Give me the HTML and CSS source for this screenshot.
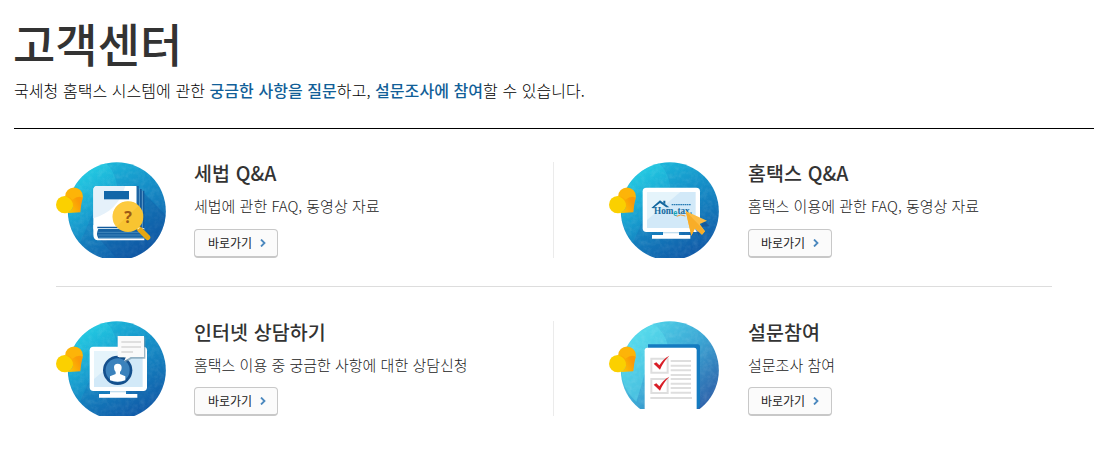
FILE: index.html
```html
<!DOCTYPE html>
<html lang="ko">
<head>
<meta charset="utf-8">
<title>고객센터</title>
<link rel="stylesheet" href="styles.css">
</head>
<body>
<svg class="defs" width="0" height="0" aria-hidden="true">
  <defs>
    <linearGradient id="sea" x1="0.2" y1="0" x2="0.75" y2="1">
      <stop offset="0" stop-color="#1cc0de"/><stop offset="0.42" stop-color="#1590c8"/><stop offset="1" stop-color="#1055a4"/>
    </linearGradient>
    <linearGradient id="sky" x1="0.15" y1="0.1" x2="0.9" y2="0.85">
      <stop offset="0" stop-color="#4fd6ea"/><stop offset="0.5" stop-color="#3ba6d4"/><stop offset="1" stop-color="#2c5fa8"/>
    </linearGradient>
    <linearGradient id="shine" x1="0" y1="0" x2="0.5" y2="1">
      <stop offset="0" stop-color="#2fe0ea" stop-opacity="0.65"/><stop offset="1" stop-color="#18b4dc" stop-opacity="0.1"/>
    </linearGradient>
    <linearGradient id="gold" gradientUnits="userSpaceOnUse" x1="40" y1="160" x2="84" y2="136">
      <stop offset="0" stop-color="#fbd000"/><stop offset="1" stop-color="#fb9907"/>
    </linearGradient>
    <clipPath id="disc"><circle cx="200.500" cy="168.500" r="147"/></clipPath>
    <filter id="grain" x="0" y="0" width="1" height="1">
      <feTurbulence type="fractalNoise" baseFrequency="0.07" numOctaves="3" seed="4"/>
      <feColorMatrix values="0 0 0 0 1  0 0 0 0 1  0 0 0 0 1  1.1 0 0 0 -0.42"/>
      <feComposite in2="SourceGraphic" operator="in"/>
    </filter>
    <g id="heart">
      <circle cx="72" cy="124" r="26.500" fill="#fdb408"/>
      <circle cx="44" cy="149" r="26" fill="#fbd000"/>
      <path d="M46 124Q58 121 67 134Q85 120 98 128Q93 148 91 172L44 175Q64 172 69 155Q72 134 46 124Z" fill="url(#gold)"/>
    </g>
    <g id="globe">
      <circle cx="200.500" cy="168.500" r="147" fill="url(#sea)"/>
      <path d="M55 170A147 147 0 0 1 168 25Q195 50 202 95L130 170L90 264Q58 225 55 170Z" fill="url(#shine)"/>
      <circle cx="200.500" cy="168.500" r="147" filter="url(#grain)" opacity="0.16"/>
    </g>
    <g id="monitor">
      <path d="M280 120L291 135V252H254L230 230Z" fill="#1668ad" opacity="0.45"/>
      <rect x="119" y="98" width="172" height="133" rx="11" fill="#fff"/>
      <rect x="132" y="111" width="146" height="108" fill="#d2e9f8"/>
      <path d="M132 111H232L132 195Z" fill="#e5f4fb"/>
      <path d="M180 230H228V240H262V251H147V240H180Z" fill="#fff"/>
      <path d="M180 231H228V235H180Z" fill="#c3deee"/>
    </g>
  </defs>
</svg>

<main class="page">
  <header class="head">
    <h1 class="title">고객센터</h1>
    <p class="lead">국세청 홈택스 시스템에 관한 <strong>궁금한 사항을 질문</strong>하고, <strong>설문조사에 참여</strong>할 수 있습니다.</p>
  </header>

  <div class="services">
    <section class="row">
      <article class="card">
        <svg class="icon" viewBox="18 21 330 288">
          <use href="#globe"/>
          <path d="M283 115L347 180V309H200L150 254Z" fill="#0c4f9b" opacity="0.3" clip-path="url(#disc)"/>
          <path d="M245 93H266V102H275V107H283V220H130V210Z" fill="#135b9d"/>
          <path d="M260 94V220M268 101V220M277 107V220" stroke="#8abfe0" stroke-width="2"/>
          <path d="M130 105Q130 93 142 93H259V215H142Q130 215 130 228Z" fill="#fff"/>
          <path d="M130 105Q130 93 142 93H226C210 145 180 175 130 190Z" fill="#e5f1fa"/>
          <path d="M130 210H142V220H283V224H145V250H283V256H142Q130 255 130 238Z" fill="#fff"/>
          <path d="M145 222H283V250H145Q137 237 145 222Z" fill="#1662a2"/>
          <path d="M145 232H282M144 240H282M146 247H282" stroke="#71aed5" stroke-width="1.500"/>
          <rect x="162" y="108" width="75" height="25" fill="#1266a8"/>
          <path d="M269 223L293 247" stroke="#e8a711" stroke-width="16" stroke-linecap="round"/>
          <path d="M259 213L267 221" stroke="#fff0b0" stroke-width="8"/>
          <circle cx="234" cy="185" r="46" fill="#f8c431"/>
          <path d="M199 155A46 46 0 0 0 199 215L265 153A46 46 0 0 0 199 155Z" fill="#ffce46" opacity="0.65"/>
          <text class="question" x="234" y="205" text-anchor="middle">?</text>
          <use href="#heart"/>
        </svg>
        <div class="body">
          <h2 class="name">세법 Q&amp;A</h2>
          <p class="desc">세법에 관한 FAQ, 동영상 자료</p>
          <a class="go">바로가기<svg class="arrow" viewBox="0 0 6 8"><path d="M1 0.500L4.500 4L1 7.500"/></svg></a>
        </div>
      </article>
      <article class="card">
        <svg class="icon" viewBox="18 21 330 288">
          <use href="#globe"/>
          <use href="#monitor"/>
          <path d="M145 159L171 136L199 157H190L171 144L155 156V160Z" fill="#12679f"/>
          <path d="M181 137H187V148L181 144Z" fill="#12679f"/>
          <path d="M206 149H263" stroke="#287cb4" stroke-width="4" stroke-dasharray="5 1.500"/>
          <text class="brand" x="153" y="177" textLength="114" lengthAdjust="spacingAndGlyphs">Hom<tspan class="brand-e" dy="6">e</tspan><tspan dy="-6">tax.</tspan></text>
          <path d="M221 184Q232 176 247 183" fill="none" stroke="#ed9c38" stroke-width="3"/>
          <path d="M292 217L320 213L300 194L288 244L274 218Z" fill="#174f8c" opacity="0.6"/>
          <path d="M248 168L312 197L290 207L306 229L297 239L276 220L265 242Z" fill="#fcbc43"/>
          <path d="M248 168L306 229L297 239L276 220L265 242Z" fill="#f8ad28"/>
          <use href="#heart"/>
        </svg>
        <div class="body">
          <h2 class="name">홈택스 Q&amp;A</h2>
          <p class="desc">홈택스 이용에 관한 FAQ, 동영상 자료</p>
          <a class="go">바로가기<svg class="arrow" viewBox="0 0 6 8"><path d="M1 0.500L4.500 4L1 7.500"/></svg></a>
        </div>
      </article>
    </section>

    <section class="row row-last">
      <article class="card">
        <svg class="icon" viewBox="18 21 330 285">
          <use href="#globe"/>
          <use href="#monitor"/>
          <circle cx="203" cy="169" r="44" fill="#14508d"/>
          <circle cx="203" cy="169" r="36" fill="#3b82bc"/>
          <path d="M192 160Q192 149 203 149Q215 149 215 161Q215 169 210 174V180L226 187V199Q203 207 180 199V187L197 180V174Q192 169 192 160Z" fill="#fff"/>
          <path d="M207 70H286V134H245L223 146L230 132H207Z" fill="#7899ad" opacity="0.7"/>
          <path d="M203 66H282V129H242L222 142L228 129H203Z" fill="#fafafa"/>
          <path d="M214 84H273M214 99H273M214 114H249" stroke="#d6d6d6" stroke-width="5"/>
          <use href="#heart"/>
        </svg>
        <div class="body">
          <h2 class="name">인터넷 상담하기</h2>
          <p class="desc">홈택스 이용 중 궁금한 사항에 대한 상담신청</p>
          <a class="go">바로가기<svg class="arrow" viewBox="0 0 6 8"><path d="M1 0.500L4.500 4L1 7.500"/></svg></a>
        </div>
      </article>
      <article class="card">
        <svg class="icon" viewBox="18 21 330 285">
          <circle cx="200.500" cy="168.500" r="147" fill="url(#sky)"/>
          <path d="M55 170A147 147 0 0 1 153 31Q185 55 195 95L125 180L100 264Q58 225 55 170Z" fill="#5ee3ef" opacity="0.4"/>
          <circle cx="200.500" cy="168.500" r="147" filter="url(#grain)" opacity="0.18"/>
          <path d="M135 91H284Q291 91 291 99V276L279 290V102H135Z" fill="#147bc0"/>
          <path d="M125 306V109Q125 101 133 101H273Q281 101 281 109V306Z" fill="#fff"/>
          <path d="M60 285H340V306H60Z" fill="#fff"/>
          <path d="M145 134H194V176H145ZM145 195H194V237H145Z" fill="#fff" stroke="#dedede" stroke-width="6"/>
          <path d="M203 141H264M203 155H264M203 169H264M203 183H264M203 195H264M203 209H264M203 222H264M203 236H264M142 252H267" stroke="#dedede" stroke-width="6"/>
          <path id="tick" d="M152 149L160 145L169 154Q180 135 199 125Q180 144 171 167Z" fill="#d91e27"/>
          <use href="#tick" y="63"/>
          <use href="#heart"/>
        </svg>
        <div class="body">
          <h2 class="name">설문참여</h2>
          <p class="desc">설문조사 참여</p>
          <a class="go">바로가기<svg class="arrow" viewBox="0 0 6 8"><path d="M1 0.500L4.500 4L1 7.500"/></svg></a>
        </div>
      </article>
    </section>
  </div>
</main>
</body>
</html>
```
FILE: styles.css
```css
* { box-sizing: border-box; }
body {
  margin: 0;
  background: #fff;
  color: #333;
  font-family: "Noto Sans CJK KR", sans-serif;
}
h1, h2, p { margin: 0; font-weight: 400; }
.defs { display: block; }
.page { width: 1094px; padding-left: 14px; }
.head { height: 129px; padding-top: 12px; border-bottom: 1px solid #000; }
.title { margin-left: -1px; font-size: 46px; line-height: 61px; font-weight: 500; white-space: nowrap; }
.lead { margin-top: 5px; font-size: 16px; line-height: 24px; font-weight: 300; letter-spacing: 0.06px; color: #000; white-space: nowrap; }
.lead strong { font-weight: 500; color: #125f98; }
.services { width: 996px; margin-left: 42px; }
.row { display: grid; grid-template-columns: 498px 498px; height: 158px; padding-top: 33px; border-bottom: 1px solid #ddd; }
.row-last { height: 130px; padding-top: 34px; border-bottom: 0; }
.card { display: flex; gap: 28px; height: 96px; }
.row-last .card { height: 95px; }
.card + .card { gap: 29px; padding-left: 55px; border-left: 1px solid #ebebeb; margin-left: -1px; }
.icon { flex: none; width: 110px; height: 96px; }
.row-last .icon { height: 95px; }
.body { display: flex; flex-direction: column; align-items: flex-start; white-space: nowrap; }
.name { margin-top: -1px; font-size: 19.5px; line-height: 24px; font-weight: 500; letter-spacing: 0.1px; }
.desc { margin-top: 10px; font-size: 15px; line-height: 22px; font-weight: 300; color: #222; }
.go {
  display: flex;
  align-items: center;
  gap: 8px;
  width: 84px;
  height: 29px;
  margin-top: 12px;
  padding-left: 13px;
  border: 1px solid #c8c8c8;
  border-bottom-width: 2px;
  border-radius: 4px;
  background: #fbfbfb;
  font-size: 12px;
  line-height: 18px;
  color: #222;
}
.card + .card .go { padding-left: 12px; }
.row-last .go { margin-top: 11px; }
.arrow { width: 6px; height: 8px; fill: none; stroke: #4b88be; stroke-width: 1.8; }
.question { font: 700 48px "Open Sans", sans-serif; fill: #9d5b16; }
.brand { font: 700 32px "Liberation Serif", serif; fill: #156a9e; }
.brand-e { font-family: "Liberation Sans", sans-serif; font-size: 26px; fill: #13a3b6; }
```
